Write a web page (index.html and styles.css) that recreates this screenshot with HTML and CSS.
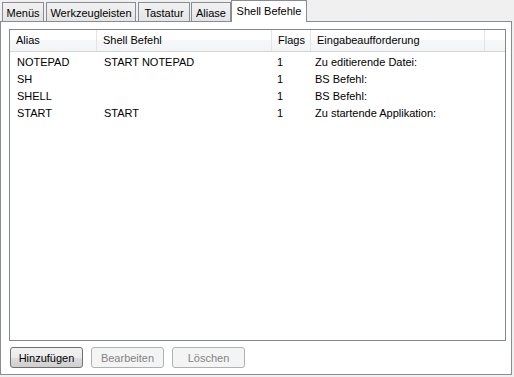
FILE: index.html
```html
<!DOCTYPE html>
<html>
<head>
<meta charset="utf-8">
<link rel="stylesheet" href="styles.css">
</head>
<body>
<div class="dialog">
  <div class="tabs">
    <div class="tab t1">Menüs</div>
    <div class="tab t2">Werkzeugleisten</div>
    <div class="tab t3">Tastatur</div>
    <div class="tab t4">Aliase</div>
    <div class="tab active t5">Shell Befehle</div>
  </div>
  <div class="panel">
    <div class="listbox">
      <div class="row header">
        <div class="cell c1">Alias</div>
        <div class="cell c2">Shell Befehl</div>
        <div class="cell c3">Flags</div>
        <div class="cell c4">Eingabeaufforderung</div>
        <div class="cell c5"></div>
      </div>
      <div class="body">
        <div class="row item"><div class="cell c1">NOTEPAD</div><div class="cell c2">START NOTEPAD</div><div class="cell c3">1</div><div class="cell c4">Zu editierende Datei:</div></div>
        <div class="row item"><div class="cell c1">SH</div><div class="cell c2"></div><div class="cell c3">1</div><div class="cell c4">BS Befehl:</div></div>
        <div class="row item"><div class="cell c1">SHELL</div><div class="cell c2"></div><div class="cell c3">1</div><div class="cell c4">BS Befehl:</div></div>
        <div class="row item"><div class="cell c1">START</div><div class="cell c2">START</div><div class="cell c3">1</div><div class="cell c4">Zu startende Applikation:</div></div>
      </div>
    </div>
    <div class="buttons">
      <button class="btn">Hinzufügen</button>
      <button class="btn disabled">Bearbeiten</button>
      <button class="btn disabled">Löschen</button>
    </div>
  </div>
</div>
</body>
</html>
```
FILE: styles.css
```css
html, body {
  margin: 0;
  padding: 0;
  background: #f0f0f0;
}
body {
  width: 514px;
  height: 377px;
  font-family: "Liberation Sans", Arial, sans-serif;
  font-size: 11px;
  color: #000;
}
.dialog {
  display: flex;
  flex-direction: column;
  width: 512px;
}
.tabs {
  display: flex;
  align-items: flex-end;
  height: 21px;
  padding-left: 2px;
  position: relative;
  z-index: 2;
}
.tab {
  box-sizing: border-box;
  height: 19px;
  border: 1px solid #898c95;
  border-bottom: none;
  background: linear-gradient(#f2f2f2, #e4e4e4);
  display: flex;
  align-items: center;
  justify-content: center;
  margin-right: 2px;
  padding-top: 1px;
}
.t1 { width: 42px; }
.t2 { width: 90px; }
.t3 { width: 52px; margin-right: 1px; }
.t4 { width: 40px; margin-right: 0; }
.tab.active {
  width: 76px;
  height: 22px;
  margin-bottom: -1px;
  background: #fff;
  padding-top: 0;
  padding-bottom: 2px;
}
.panel {
  box-sizing: border-box;
  width: 512px;
  height: 354px;
  border: 1px solid #898c95;
  background: #fff;
  padding: 7px 5px 0 8px;
  display: flex;
  flex-direction: column;
}
.listbox {
  box-sizing: border-box;
  height: 312px;
  border: 1px solid #828790;
  background: #fff;
  display: flex;
  flex-direction: column;
}
.row {
  display: flex;
}
.header {
  height: 21px;
  background: linear-gradient(#ffffff 0%, #ffffff 45%, #f6f7f8 50%, #f3f4f6 100%);
  border-bottom: 1px solid #d5d5d5;
}
.header .cell {
  box-sizing: border-box;
  border-right: 1px solid #e3e4e6;
  display: flex;
  align-items: center;
  padding-left: 6px;
  padding-bottom: 1px;
}
.c1 { width: 87px; }
.c2 { width: 175px; }
.c3 { width: 39px; }
.c4 { width: 174px; }
.header .c5 { flex: 1; border-right: none; }
.body {
  padding-top: 1px;
}
.item {
  height: 17px;
  align-items: center;
}
.item .cell {
  box-sizing: border-box;
  padding-left: 7px;
  white-space: nowrap;
}
.item .c3 { padding-left: 5px; }
.item .c4 { padding-left: 4px; }
.buttons {
  display: flex;
  gap: 8px;
  padding-top: 6px;
  padding-left: 1px;
}
.btn {
  box-sizing: border-box;
  width: 73px;
  height: 21px;
  font-family: "Liberation Sans", Arial, sans-serif;
  font-size: 11px;
  color: #000;
  border: 1px solid #707070;
  border-radius: 3px;
  background: linear-gradient(#f2f2f2 0%, #ebebeb 50%, #dddddd 51%, #cfcfcf 100%);
  padding: 0;
}
.btn.disabled {
  border-color: #adb2b5;
  background: #f4f4f4;
  color: #838383;
}
```
